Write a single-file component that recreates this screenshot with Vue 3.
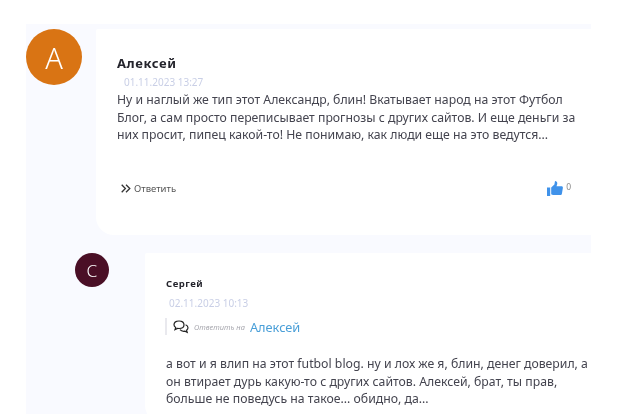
<script setup>
const comments = [
  {
    id: 1,
    author: 'Алексей',
    letter: 'А',
    date: '01.11.2023 13:27',
    lines: [
      'Ну и наглый же тип этот Александр, блин! Вкатывает народ на этот Футбол',
      'Блог, а сам просто переписывает прогнозы с других сайтов. И еще деньги за',
      'них просит, пипец какой-то! Не понимаю, как люди еще на это ведутся...'
    ],
    likes: 0
  },
  {
    id: 2,
    author: 'Сергей',
    letter: 'С',
    date: '02.11.2023 10:13',
    replyTo: 'Алексей',
    lines: [
      'а вот и я влип на этот futbol blog. ну и лох же я, блин, денег доверил, а',
      'он втирает дурь какую-то с других сайтов. Алексей, брат, ты прав,',
      'больше не поведусь на такое... обидно, да...'
    ]
  }
];

const [parent, child] = comments;
</script>

<template>
  <div class="page">
    <div class="panel">
      <div class="comment">
        <div class="avatar orange">{{ parent.letter }}</div>
        <div class="card">
          <div class="name">{{ parent.author }}</div>
          <div class="date">{{ parent.date }}</div>
          <div class="text">
            <div v-for="line in parent.lines" :key="line">{{ line }}</div>
          </div>
          <div class="actions">
            <a class="reply">
              <svg width="10" height="9" viewBox="0 0 10 9" fill="none" stroke="#333" stroke-width="1.3">
                <path d="M.7.700l3.700 3.800L.7 8.300M5 .7l3.800 3.800L5 8.300" />
              </svg>
              Ответить
            </a>
            <div class="likes">
              <svg width="16" height="15" viewBox="0 0 16 15" fill="#3f92ea">
                <path d="M0 6.500h3.200V15H0z" />
                <path d="M4.200 6.600 7.400 3.400 8 0c1.500 0 2.300 1 2.300 2.300 0 1-.4 2-.8 2.900h5c.9 0 1.500.7 1.400 1.500l-1 6c-.1.700-.7 1.300-1.500 1.300H6.200c-.8 0-1.300-.3-2-.7z" />
              </svg>
              <span>{{ parent.likes }}</span>
            </div>
          </div>
        </div>
      </div>

      <div class="comment nested">
        <div class="avatar maroon">{{ child.letter }}</div>
        <div class="card">
          <div class="name small">{{ child.author }}</div>
          <div class="date second">{{ child.date }}</div>
          <div class="answer">
            <svg width="16" height="14" viewBox="0 0 16 14" fill="none" stroke="#222" stroke-width="1.2">
              <path d="M6 1C3 1 1 2.600 1 4.700c0 1.200.7 2.200 1.700 2.900L2 9.600l2.600-1.200c.5.1 1 .1 1.400.1 2.900 0 5-1.600 5-3.800S8.900 1 6 1z" />
              <path d="M12.600 4.800c1.400.6 2.400 1.700 2.400 3 0 1-.6 1.900-1.400 2.500l.6 2-2.300-1.100c-1.900.3-3.900-.3-4.900-1.500" />
            </svg>
            <span class="answer-label">Ответить на</span>
            <span class="answer-name">{{ child.replyTo }}</span>
          </div>
          <div class="text second-text">
            <div v-for="line in child.lines" :key="line">{{ line }}</div>
          </div>
        </div>
      </div>
    </div>
  </div>
</template>

<style>
html,
body {
  margin: 0;
  background: #fff;
}
</style>

<style scoped>
.page {
  width: 628px;
  height: 420px;
  padding: 24px 37px 6px 26px;
  box-sizing: border-box;
  overflow: hidden;
  font-family: "Noto Sans", "Open Sans", sans-serif;
  color: #3b3b46;
  filter: blur(0.35px);
}

.panel {
  height: 390px;
  background: #f9faff;
  overflow: hidden;
  padding-top: 5px;
  box-sizing: border-box;
}

.comment {
  display: flex;
  gap: 14px;
}

.nested {
  margin-top: 18px;
  padding-left: 49px;
  gap: 36px;
}

.avatar {
  flex: none;
  width: 56px;
  height: 56px;
  border-radius: 50%;
  display: flex;
  align-items: center;
  justify-content: center;
  color: #fff;
  font-size: 29px;
  font-weight: 300;
}

.orange {
  background: #d97414;
}

.maroon {
  width: 34px;
  height: 34px;
  font-size: 17px;
  background: #4a0f26;
}

.card {
  flex: 1;
  min-width: 0;
  background: #fff;
  padding: 24px 20px 0 21px;
  height: 206px;
  box-sizing: border-box;
  border-radius: 2px 0 0 18px;
}

.nested .card {
  height: 170px;
  padding-top: 24px;
}

.name {
  font-size: 13px;
  line-height: 20px;
  font-weight: 700;
  letter-spacing: 0.6px;
  color: #24242c;
}

.name.small {
  font-size: 9.500px;
  line-height: 14px;
  letter-spacing: 0.5px;
}

.date {
  margin: 0 0 0 7px;
  font-size: 10px;
  line-height: 18px;
  color: #c9cfe6;
}

.date.second {
  margin: 3px 0 0 3px;
}

.text {
  font-size: 12.250px;
  line-height: 17.500px;
  white-space: nowrap;
  color: #44444f;
}

.second-text {
  margin-top: 20px;
}

.actions {
  display: flex;
  justify-content: space-between;
  align-items: center;
  margin-top: 36px;
  height: 18px;
}

.reply {
  display: flex;
  align-items: center;
  gap: 3px;
  margin-left: 4px;
  font-size: 9.500px;
  color: #555;
}

.likes {
  display: flex;
  align-items: flex-start;
  gap: 3px;
  font-size: 8.500px;
  color: #888;
}

.answer {
  display: flex;
  align-items: center;
  height: 17px;
  margin: 6px 0 0 -1px;
  border-left: 2px solid #e9e9ee;
  padding-left: 6px;
}

.answer-label {
  margin-left: 5px;
  font-size: 7.500px;
  font-style: italic;
  color: #a9a9b0;
}

.answer-name {
  margin-left: 5px;
  font-size: 12.800px;
  color: #4a9fd8;
}
</style>
